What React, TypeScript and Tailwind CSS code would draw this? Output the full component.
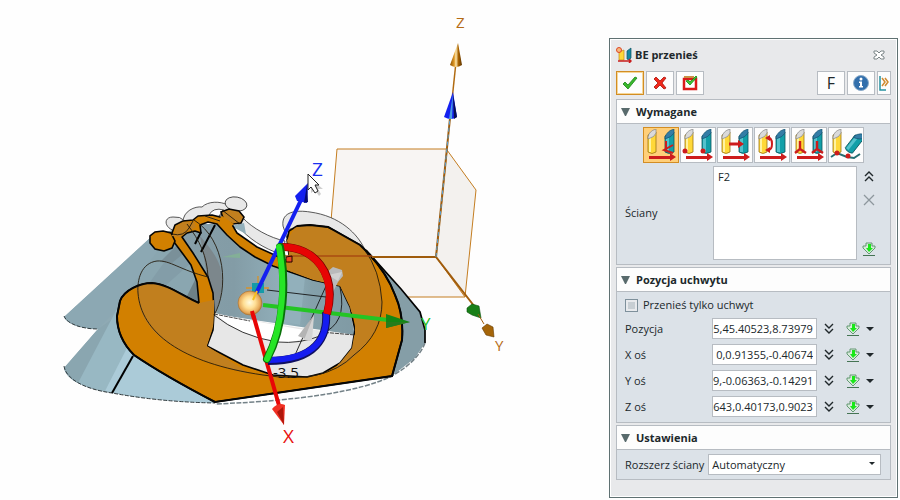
import React, { useEffect, useRef, useState } from "react";

function Scene() {
  return (
    <svg
      className="block h-[500px] w-full"
      viewBox="0 0 609 500"
      preserveAspectRatio="xMinYMin meet"
      fontFamily='"Open Sans", sans-serif'
      aria-label="Model 3D"
    >
      <defs>
        <radialGradient id="ball" cx="48%" cy="48%" r="55%">
          <stop offset="0" stopColor="#fffbe0" />
          <stop offset="0.45" stopColor="#ffdf95" />
          <stop offset="0.8" stopColor="#e5a95a" />
          <stop offset="1" stopColor="#b06f28" />
        </radialGradient>
        <linearGradient id="gold" x1="0" x2="1">
          <stop offset="0" stopColor="#8a4f00" />
          <stop offset="0.35" stopColor="#e09a28" />
          <stop offset="0.5" stopColor="#ffe9ae" />
          <stop offset="0.7" stopColor="#a86200" />
          <stop offset="1" stopColor="#5c3300" />
        </linearGradient>
        <linearGradient id="wall" x1="0" x2="1">
          <stop offset="0" stopColor="#869ea8" />
          <stop offset="0.3" stopColor="#839ca6" />
          <stop offset="0.6" stopColor="#92b0bb" />
          <stop offset="0.75" stopColor="#84a0aa" />
          <stop offset="1" stopColor="#809aa4" />
        </linearGradient>
        <clipPath id="bodyClip">
          <path
            clipRule="evenodd"
            d="M215 402C190 389 156 370 134 355C121 342 117 330 117 316L120 301C124 290 140 283 152 283C168 284 184 297 199 303L214 300L290 262L287 240L291 229L305 225L328 227L360 245C376 260 388 276 395 295Q404 315 402 340L392 376ZM214 300L214 313L213 330L207 346L243 365L273 375L307 377L323 373L340 363L352 348L355 330L350 307L340 286L313 280L290 272Z"
          />
        </clipPath>
      </defs>

      {/* reference box and main axes */}
      <g stroke="#c47d20" strokeWidth="1">
        <path d="M337 149H447L436 257H328Z" fill="#f8f5f3" />
        <path d="M447 150L476 190L465 297L436 257Z" fill="#f3f1ee" />
        <path d="M328 257H436L465 297H370Z" fill="#f8f5f3" />
      </g>
      <path d="M340 257H436L478 311" fill="none" stroke="#a05c0c" strokeWidth="2" />
      <path d="M436 257L450 118" stroke="#a05c0c" strokeWidth="2" />
      <path d="M436 257L450 118" stroke="#57a2d8" strokeWidth="1" strokeDasharray="4 3" />
      <path d="M452 100L456 62" stroke="#b06a10" strokeWidth="1.5" />
      <path d="M458 43L450 65Q456 69 462 65Z" fill="url(#gold)" />
      <path d="M453 92L444 117Q451 121 457 117Z" fill="#1420f0" />
      <path d="M453 94L454 119L457 117Z" fill="#081050" />
      <path d="M453 94L449 119H452Z" fill="#4a9de0" />
      <path d="M467 308L472 304L479 306L481 318L472 315L467 312Z" fill="#188018" stroke="#0b500b" strokeWidth="0.6" />
      <path d="M478 314L484 324" stroke="#a05c0c" />
      <path d="M482 328L487 324L493 327L494 337L486 335Z" fill="#a56508" stroke="#633900" strokeWidth="0.6" />
      <text x="456" y="28" fontSize="15" fill="#b56b14">Z</text>
      <text x="495" y="351" fontSize="15" fill="#b56b14">Y</text>

      {/* cones behind the profile */}
      <path d="M150 238L64 317C67 324 82 329 98 329L64 368C66 379 84 389 112 393Q160 402 215 403L200 225L172 230Z" fill="#8faab4" />
      <path d="M150 238L64 317C67 324 82 329 98 329L200 225Z" fill="#8ca8b3" />
      <path d="M98 329L64 368C65 374 71 380 78 383L140 300Z" fill="#8aa6b0" />
      <path d="M120 303L78 383Q90 388 105 391L145 330Z" fill="#98b8c3" />
      <path d="M128 346L105 391Q160 402 215 403Z" fill="#abcbd8" />
      <path d="M160 248L120 301L152 282L199 303L192 260L176 244Z" fill="#8aa6b0" />
      <path d="M176 246L150 282L165 286L192 262Z" fill="#839da8" />
      <path d="M176 246L160 262L172 263L183 254Z" fill="#7a9099" />
      <path d="M196 278L186 298L199 303Z" fill="#6e8187" />
      <path d="M64 316C67 324 82 329 98 329M64 366C66 379 84 389 112 393Q160 402 215 403" fill="none" stroke="#333d40" strokeDasharray="4 1.5" />
      <path d="M370 253L401 290L420 312L425 330V343L415 358L392 376Z" fill="#859ea7" />
      <path d="M366 250L401 289L420 312L425 330V343" fill="none" stroke="#000" strokeWidth="1.7" />
      <path d="M425 343Q418 361 392 376Q345 399 215 404" fill="none" stroke="#738187" strokeWidth="1.5" strokeDasharray="5 1.5" />

      {/* lifted ghost of the profile */}
      <g fill="#e8e8e8" stroke="#303030" strokeWidth="0.8">
        <path d="M183 222C183 211 195 206 202 207C208 201 220 201 228 205L236 213L215 216L199 217L192 222Z" />
        <path d="M175 231C164 228 163 217 173 217Q180 216 185 221L176 226Z" />
        <ellipse cx="236" cy="204" rx="11" ry="7" transform="rotate(10 236 204)" />
        <path d="M243 218C252 228 270 238 285 241L283 255C262 248 248 238 238 226Z" />
        <path d="M283 226C281 211 297 210 310 212C340 216 358 234 365 250L330 228L290 229L287 238Z" />
      </g>
      <path d="M231 226L244 223L246 234Z" fill="#92afba" />
      <path d="M209 215Q213 207 224 210L218 217Z" fill="#fdfdfd" stroke="#303030" strokeWidth="0.8" />

      {/* inner walls */}
      <path d="M182 236L200 224L217 224L250 252L310 278L345 288L355 335L214 314Z" fill="url(#wall)" />
      <path d="M281 270L285 322L300 325L305 277Z" fill="#92b0bb" />
      <path d="M200 236C212 250 222 262 222 280C222 300 217 308 214 314V296L207 275Z" fill="#7c878c" />
      <path d="M214 313C250 321 320 331 355 335L352 348L340 363L323 373L307 377L273 375L243 365L207 346L213 330Z" fill="#e7e7e7" />
      <path d="M214 313Q250 321 310 331Q300 345 277 342Q240 336 214 313Z" fill="#fff" />
      <path d="M214 315Q240 336 277 342Q300 344 320 336" fill="none" stroke="#202020" strokeWidth="0.9" />
      <path d="M214 314L250 321M320 332L355 335" fill="none" stroke="#303030" strokeWidth="0.9" strokeDasharray="4 1" />
      <path d="M222 257L240 253V258Z" fill="#83af97" />
      <path d="M201 232L195 244M215 225L201 252" fill="none" stroke="#000" strokeWidth="2" />
      <path d="M133 356L112 393" stroke="#000" strokeWidth="2" />

      {/* orange profile */}
      <path
        d="M215 402C190 389 156 370 134 355C121 342 117 330 117 316L120 301C124 290 140 283 152 283C168 284 184 297 199 303L197 282L191 265L183 254L174 242L172 233L175 225L183 221L193 220L198 216L212 215L220 217L230 221L237 233L257 247L290 262L287 240L289 231L297 226L310 225L328 227L360 245C376 260 388 276 395 295Q404 315 402 340L392 376ZM182 237L193 253L208 277L213 293L214 313L213 330L207 346L243 365L273 375L307 377L323 373L340 363L352 348L355 330L350 307L340 286L313 280L290 272L273 266L255 257L240 247L227 235L217 224L208 222L200 225L201 233L195 231L187 233Z"
        fillRule="evenodd"
        fill="#d28000"
        stroke="#050505"
        strokeWidth="1.6"
        strokeLinejoin="round"
      />
      <g clipPath="url(#bodyClip)">
        <path d="M199 284L157 261L130 270L138 295C140 333 174 355 250 374L207 346L215 320V284Z" fill="#c17f1e" />
        <path d="M287 240L300 220L364 240C374 265 382 286 382 305C382 335 354 360 335 370L355 334V320L340 287L313 280L287 270Z" fill="#c17f1e" />
      </g>
      <path d="M163 231L171 233L175 241L172 248L164 251L155 249L150 243L150 236L155 232Z" fill="#d28000" stroke="#050505" strokeWidth="1.6" />
      <path d="M221 212L229 209L239 211L244 217L241 223L233 224L224 221Z" fill="#c17f1e" stroke="#050505" strokeWidth="1.6" />
      <path d="M222 216L234 224L228 229L218 220Z" fill="#d28000" />
      <path d="M175 233L176 226L183 222L194 222L196 227L188 231L180 237L171 236Z" fill="#c17f1e" />
      <path d="M208 277C180 270 170 260 157 261C141 263 137 280 138 293C141 332 180 363 263 375Q325 385 354 355Q382 334 382 302Q380 270 364 249M187 224C200 241 207 256 208 277M194 220C226 240 229 290 214 315M172 234Q184 237 189 228L193 221M222 210L240 224M205 216L220 221" fill="none" stroke="#241b0d" strokeWidth="0.9" />
      <path d="M199 303C184 297 168 284 152 283C140 283 124 290 120 301L117 316C117 330 121 342 134 355C156 370 190 389 215 402L392 376L402 340Q404 315 395 295C388 276 376 260 360 245L328 227L310 225L297 226" fill="none" stroke="#050505" strokeWidth="2" />
      <path d="M278 256H372" stroke="#a84b12" strokeWidth="1.4" />
      <path d="M372 257H389" stroke="#a05c0c" strokeWidth="2" />
      <path d="M286 257L292 256V262L286 262Z" fill="#e94828" stroke="#200" />
      <path d="M267 290L326 297M326 286L295 355M340 287Q348 325 320 334" fill="none" stroke="#151515" strokeWidth="0.9" />
      <path d="M314 315L298 336L310 341Z" fill="#b4b4b4" />
      <path d="M314 315L304 340L312 341Z" fill="#d3d3d3" />
      <path d="M327 272L333 267L342 270L343 276L338 282L333 292L326 283Z" fill="#b9babb" />
      <path d="M328 275L342 272L338 281Z" fill="#d1d1d1" />

      {/* manipulator */}
      <path d="M246 288H269M258 276V294" stroke="#d8922a" strokeWidth="1.3" />
      <path d="M252 283H264V293H252Z" fill="#149ba8" />
      <path d="M263 305L388 320" stroke="#24c524" strokeWidth="4" />
      <path d="M386 314L410 322L386 328Z" fill="#148614" />
      <path d="M386 322L410 322L386 328Z" fill="#277c1c" />
      <path d="M254 298L301 200" stroke="#1420f0" strokeWidth="4" />
      <path d="M308 183L295 196L297 201L307 203Z" fill="#1420f0" />
      <path d="M307 185L308 202L304 203Z" fill="#070b70" />
      <path d="M251 307L280 409" stroke="#e80606" strokeWidth="4" />
      <path d="M272 409Q278 402 285 405L284 425Z" fill="#f03024" />
      <path d="M277 412L283 407L284 425Z" fill="#ae160b" />
      <g fill="none" strokeWidth="8">
        <path d="M326 312C328 337 316 361 268 361" stroke="#101060" />
        <path d="M326 312C328 337 316 360 268 360" stroke="#151cf0" strokeWidth="6" />
        <path d="M282 247C314 247 338 273 327 314" stroke="#750000" />
        <path d="M282 247C314 247 337 273 327 314" stroke="#e70404" strokeWidth="7" />
        <path d="M280 247C286 280 285 325 267 359" stroke="#087008" strokeLinecap="round" />
        <path d="M279 247C285 280 284 325 267 359" stroke="#26e526" strokeWidth="6" strokeLinecap="round" />
      </g>
      <circle cx="250" cy="303" r="12" fill="url(#ball)" stroke="#aa7436" strokeWidth="0.6" />
      <path d="M253 300L257 291" stroke="#f7c020" strokeWidth="2" />
      <path d="M252 311L254 319" stroke="#e80606" strokeWidth="4" />
      <text x="312" y="176" fontSize="19" fill="#1a30f0">Z</text>
      <text x="283" y="443" fontSize="19" fill="#e81010">X</text>
      <text x="421" y="330" fontSize="17" fill="#24bf24">Y</text>
      <text x="273" y="378" fontSize="15" fill="#101010">-3.5</text>
      <path d="M309 177V191L313 188L317 194L319 192L316 187H321Z" fill="#777" opacity="0.35" transform="translate(2 2)" />
      <path d="M308 174V190L311 187L315 193L318 191L315 185H319Z" fill="#fff" stroke="#222" strokeWidth="1" />
    </svg>
  );
}

/* one yellow and one teal cylinder, shared by the command icons */
function Cylinders({ tilted = false }: { tilted?: boolean }) {
  return (
    <>
      <path d="M3 6V23Q7 26 11 23V3Z" fill="#ffd838" stroke="#9a7414" strokeWidth="0.8" />
      <path d="M4 8V23H6V7Z" fill="#fff3a0" />
      <path d="M3 8Q4 2 11 0V4Q10 8 3 10Z" fill="#dadada" stroke="#777" strokeWidth="0.6" />
      <g transform={tilted ? "rotate(38 24 14)" : undefined}>
        <path d="M20 7V23Q24 26 29 23V3Z" fill="#129fa8" stroke="#0c555e" strokeWidth="0.8" />
        <path d="M21 8V23H24V7Z" fill="#54c2cd" />
        <path d="M20 8Q22 2 29 0V4Q27 8 20 10Z" fill="#347da6" stroke="#0c4b68" strokeWidth="0.6" />
      </g>
    </>
  );
}

function MoveIcon({ kind }: { kind: number }) {
  return (
    <svg className="size-8" viewBox="0 0 32 32" aria-hidden="true">
      <Cylinders tilted={kind === 5} />
      {kind < 5 && (
        <path d="M4 27H25V24L31 28L25 32V30H4Z" fill="#cd1c1c" />
      )}
      <g fill="none" stroke="#cd1c1c" strokeWidth="2">
        {kind === 0 && <path d="M21 12V21M28 16L19 21L28 24" />}
        {kind === 1 && (
          <g fill="#cd1c1c" stroke="none">
            <circle cx="3" cy="22" r="2.500" />
            <circle cx="21" cy="22" r="2.500" />
          </g>
        )}
        {kind === 2 && (
          <>
            <path d="M10 15H21" strokeWidth="3" />
            <path d="M19 11L25 15L19 19Z" fill="#cd1c1c" stroke="none" />
          </>
        )}
        {kind === 3 && (
          <>
            <path d="M11 9Q16 8 16 15Q16 21 12 21" />
            <path d="M14 6V12L9 9ZM14 18V24L9 21Z" fill="#cd1c1c" stroke="none" />
          </>
        )}
        {kind === 4 && <path d="M7 12V20L2 24M7 20L13 24M24 12V20L19 24M24 20L30 24" strokeWidth="2.400" />}
      </g>
      {kind === 5 && (
        <>
          <path d="M1 28L7 24L17 28L24 29L30 25" fill="none" stroke="#236e72" strokeWidth="2" />
          <circle cx="7" cy="24" r="2.500" fill="#cd1c1c" />
          <circle cx="18" cy="27" r="2.500" fill="#cd1c1c" />
        </>
      )}
    </svg>
  );
}

function Check() {
  return (
    <svg className="size-4" viewBox="0 0 16 16" aria-hidden="true">
      <path d="M1 9L3 7L6 10L13 2L15 3L6 14Z" fill="#39b92c" stroke="#188417" strokeWidth="0.8" />
    </svg>
  );
}

function Cross() {
  return (
    <svg className="size-4" viewBox="0 0 16 16" aria-hidden="true">
      <path d="M2 4L4 2L8 6L12 2L14 3L10 8L14 13L12 14L8 10L4 14L2 12L6 8Z" fill="#f0291c" stroke="#a81109" strokeWidth="0.8" />
    </svg>
  );
}

function Apply() {
  return (
    <svg className="size-4" viewBox="0 0 16 16" aria-hidden="true">
      <path d="M2 4H14V14H2Z" fill="#fff" stroke="#dc1919" strokeWidth="2.500" />
      <path d="M2 2H12" stroke="#ca8f43" strokeWidth="2" />
      <path d="M4 6L6 5L8 7L14 1L15 2L8 10Z" fill="#43c734" stroke="#168616" strokeWidth="0.8" />
    </svg>
  );
}

function Info() {
  return (
    <svg className="size-4" viewBox="0 0 16 16" aria-hidden="true">
      <circle cx="8" cy="8" r="7.500" fill="#326fac" stroke="#8aaac8" />
      <circle cx="8" cy="4" r="1.500" fill="#fff" />
      <path d="M6 6.500H9V11H10V12.500H6V11H7V8H6Z" fill="#fff" />
    </svg>
  );
}

function TitleIcon() {
  return (
    <svg className="size-4" viewBox="0 0 16 16" aria-hidden="true">
      <path d="M3 5V13H8V3Z" fill="#ffd838" stroke="#c28a18" strokeWidth="0.700" />
      <path d="M11 4L15 1V11L13 13L11 12Z" fill="#1687a0" stroke="#0d5361" strokeWidth="0.700" />
      <circle cx="3" cy="3" r="2.500" fill="#f5ba80" stroke="#df4624" />
      <path d="M2 14H15M13 12L15 14L13 16" fill="none" stroke="#c81c1c" strokeWidth="1.500" />
    </svg>
  );
}

function Download() {
  return (
    <svg className="size-[14px]" viewBox="0 0 14 14" aria-hidden="true">
      <path d="M4 1H10V4H13V6L7 12L1 6V4H4Z" fill="#d8eadb" stroke="#579166" strokeWidth="0.900" />
      <path d="M6 2H9V6H11L7 10L4 6H6Z" fill="#19e819" />
      <path d="M1 13.500H13" stroke="#457454" />
    </svg>
  );
}

function Chevrons({ up = false }: { up?: boolean }) {
  return (
    <svg className={up ? "size-3 rotate-180" : "size-3"} viewBox="0 0 12 12" aria-hidden="true">
      <path d="M2 1L6 5L10 1M2 6L6 10L10 6" fill="none" stroke="#20282b" strokeWidth="1.400" />
    </svg>
  );
}

function Section({ title, children }: { title: string; children: React.ReactNode }) {
  return (
    <section className="border border-[#b7bcc2] bg-[#dce2e8]">
      <h2 className="border-b border-[#b7bcc2] bg-[#fdfdfd]">
        <button className="flex h-[23px] w-full items-center gap-1.5 px-1 font-bold" aria-expanded="true">
          <svg className="h-2 w-[9px]" viewBox="0 0 9 8" aria-hidden="true">
            <path d="M0 0H9L5 8H4Z" fill="#586a6c" />
          </svg>
          {title}
        </button>
      </h2>
      {children}
    </section>
  );
}

function VectorField({ id, label, initial }: { id: string; label: string; initial: string }) {
  const box = useRef<HTMLInputElement>(null);
  const [value, setValue] = useState(initial);

  /* long vectors show their last component first */
  useEffect(() => {
    if (box.current) box.current.scrollLeft = box.current.scrollWidth;
  }, []);

  return (
    <div className="flex items-center pr-4 pl-2">
      <label htmlFor={id} className="flex-1">{label}</label>
      <input
        id={id}
        ref={box}
        value={value}
        onChange={(e) => setValue(e.target.value)}
        className="h-[21px] w-[105px] border border-[#b7bcc2] bg-white pr-[3px] text-right outline-none"
      />
      <button className="ml-[6px] flex size-3 items-center justify-center" aria-label="Rozwiń"><Chevrons /></button>
      <button className="ml-[11px]" aria-label="Pobierz"><Download /></button>
      <button className="ml-[6px]" aria-label="Menu">
        <svg className="h-1 w-2" viewBox="0 0 8 4" aria-hidden="true"><path d="M0 0H8L4 4Z" fill="#20282b" /></svg>
      </button>
    </div>
  );
}

const tools = ["Dynamicznie", "Punkt do punktu", "Wzdłuż kierunku", "Wokół kierunku", "Układ do układu", "Wzdłuż ścieżki"];
const vectors = [
  { id: "pozycja", label: "Pozycja", value: "95,45.40523,8.73979" },
  { id: "xos", label: "X oś", value: "0,0.91355,-0.40674" },
  { id: "yos", label: "Y oś", value: "9,-0.06363,-0.14291" },
  { id: "zos", label: "Z oś", value: "5643,0.40173,0.9023" },
];
const toolButton = "flex h-6 w-7 items-center justify-center border border-[#b7bcc2] bg-[#fdfdfd]";

export default function App() {
  const [tool, setTool] = useState(0);
  return (
    <div className="flex min-h-screen items-start bg-[#fefefe] font-['Open_Sans','Noto_Sans',sans-serif] text-[11px] leading-4 text-[#20282b]">
      <main className="min-w-0 flex-1">
        <Scene />
      </main>

      <aside className="mt-[38px] mr-[2px] w-[289px] shrink-0 border border-[#5f7172] bg-white p-px">
        <div className="bg-[#e8e9eb] px-[5px] pb-4">
          <header className="mb-[2px] flex h-[29px] items-center gap-[3px] pr-[6px]">
            <TitleIcon />
            <h1 className="flex-1 font-bold">BE przenieś</h1>
            <button aria-label="Zamknij">
              <svg className="h-[10px] w-3" viewBox="0 0 12 10" aria-hidden="true">
                <path d="M1 1H4L6 3L8 1H11V3L8 5L11 7V9H8L6 7L4 9H1V7L4 5L1 3Z" fill="#fff" stroke="#7b8587" />
              </svg>
            </button>
          </header>

          <div className="mb-1 flex gap-[2px]">
            <button className="flex h-6 w-7 items-center justify-center border border-[#d28d24] bg-[#fdfdfd] outline outline-1 -outline-offset-2 outline-[#f7d797]" aria-label="OK"><Check /></button>
            <button className={toolButton} aria-label="Anuluj"><Cross /></button>
            <button className={toolButton} aria-label="Zastosuj"><Apply /></button>
            <span className="flex-1" />
            <button className={`${toolButton} text-[16px]`}>F</button>
            <button className={toolButton} aria-label="Informacje"><Info /></button>
            <button className="flex h-6 w-[14px] items-center justify-center border border-[#b7bcc2] bg-[#fdfdfd]" aria-label="Więcej">
              <svg className="h-4 w-[10px] shrink-0" viewBox="0 0 10 16" aria-hidden="true">
                <path d="M1 1V15H7" fill="none" stroke="#2691a0" strokeWidth="1.500" />
                <path d="M3 3L6 7L3 11M6 3L9 7L6 11" fill="none" stroke="#d08a30" strokeWidth="1.500" />
              </svg>
            </button>
          </div>

          <div className="flex flex-col gap-[2px]">
            <Section title="Wymagane">
              <div className="flex gap-px pt-[3px] pl-[26px]">
                {tools.map((name, i) => (
                  <button
                    key={name}
                    aria-label={name}
                    onClick={() => setTool(i)}
                    className={
                      i === tool
                        ? "flex size-9 items-center justify-center border border-[#d28d24] bg-[#ffcf79]"
                        : "flex size-9 items-center justify-center border border-[#b7bcc2] bg-[#fdfdfd]"
                    }
                  >
                    <MoveIcon kind={i} />
                  </button>
                ))}
              </div>
              <div className="flex pt-[3px] pr-[9px] pb-1 pl-2">
                <label htmlFor="sciany" className="flex-1 self-center">Ściany</label>
                <textarea
                  id="sciany"
                  defaultValue="F2"
                  className="h-[94px] w-36 resize-none border border-[#b7bcc2] bg-white px-1 py-[2px] outline-none"
                />
                <div className="flex w-6 flex-col items-center pt-1 pb-1">
                  <button aria-label="Zwiń"><Chevrons up /></button>
                  <button className="mt-3" aria-label="Usuń">
                    <svg className="size-3" viewBox="0 0 12 12" aria-hidden="true">
                      <path d="M1 1L11 11M11 1L1 11" stroke="#8d979d" strokeWidth="1.300" />
                    </svg>
                  </button>
                  <button className="mt-auto" aria-label="Pobierz"><Download /></button>
                </div>
              </div>
            </Section>

            <Section title="Pozycja uchwytu">
              <div className="flex flex-col gap-[5px] py-[5px]">
                <label className="flex items-center gap-[5px] px-2">
                  <input type="checkbox" className="size-[13px] appearance-none border border-[#7e909b] bg-[#c7ced3] shadow-[inset_0_0_0_2px_#e8eaed]" />
                  Przenieś tylko uchwyt
                </label>
                {vectors.map((v) => (
                  <VectorField key={v.id} id={v.id} label={v.label} initial={v.value} />
                ))}
              </div>
            </Section>

            <Section title="Ustawienia">
              <div className="flex items-center gap-1 py-[4px] pr-[9px] pl-2">
                <label htmlFor="rozszerz" className="whitespace-nowrap">Rozszerz ściany</label>
                <div className="relative min-w-0 flex-1">
                  <select id="rozszerz" className="block h-[21px] w-full appearance-none border border-[#b7bcc2] bg-white pl-[3px] outline-none">
                    <option>Automatyczny</option>
                  </select>
                  <svg className="pointer-events-none absolute top-2 right-[6px] h-[3px] w-[6px]" viewBox="0 0 6 3" aria-hidden="true">
                    <path d="M0 0H6L3 3Z" fill="#20282b" />
                  </svg>
                </div>
              </div>
            </Section>
          </div>
        </div>
      </aside>
    </div>
  );
}
